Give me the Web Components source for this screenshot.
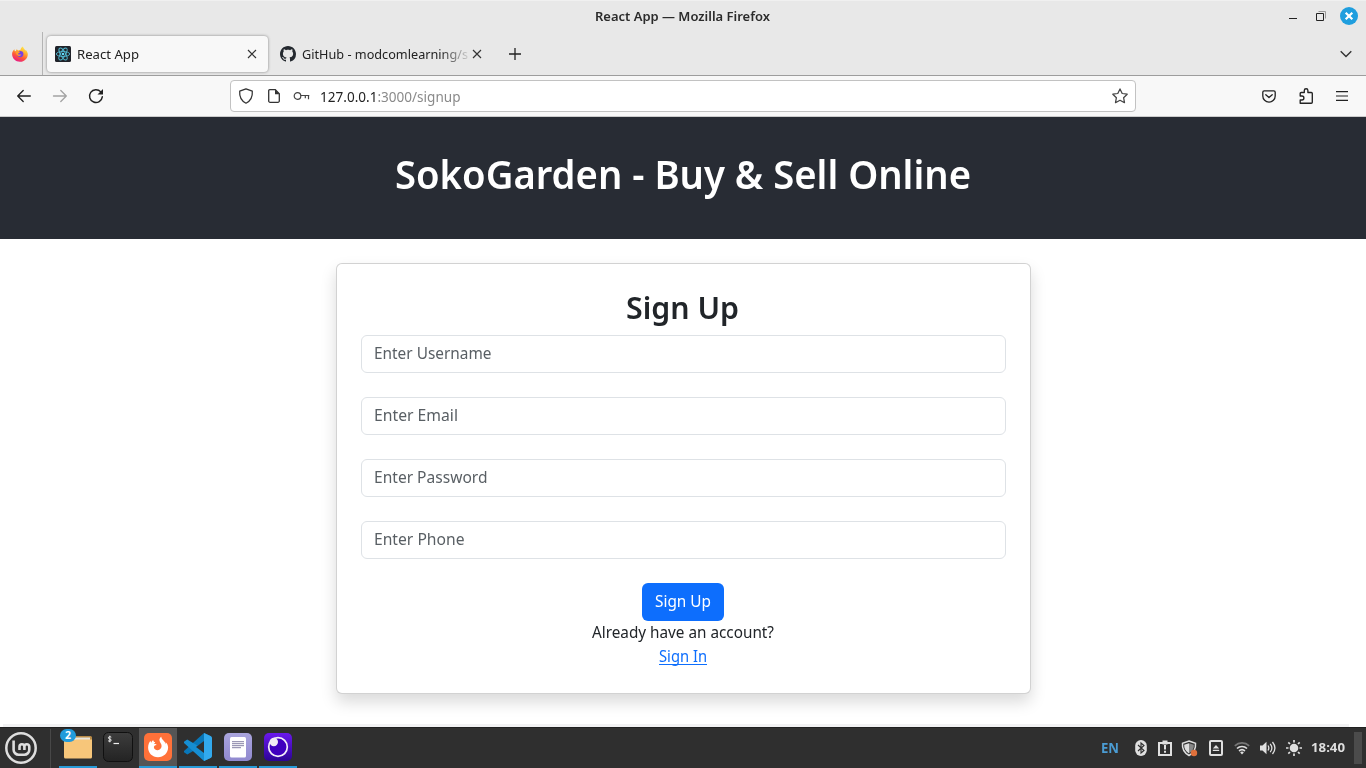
<!DOCTYPE html>
<html lang="en">
<head>
<meta charset="utf-8">
<title>React App</title>
<style>
html,body{margin:0;height:100%;overflow:hidden}
body{font-family:"Noto Sans","Open Sans",sans-serif;color:#212529;background:#fff}
</style>
</head>
<body>
<desk-screen></desk-screen>
<script>
const icons = {
firefox:['0 0 16 16','<defs><linearGradient id="a" x1=".8" y1="0" x2=".3" y2="1"><stop offset="0" stop-color="#fff14f"/><stop offset=".35" stop-color="#ffb02e"/><stop offset=".65" stop-color="#ff5a35"/><stop offset="1" stop-color="#e5158b"/></linearGradient></defs><path fill="url(#a)" d="M15.3 6.2c-.4-1-1.1-1.9-1.8-2.2.3.7.5 1.300.6 1.800-.7-2.300-2.500-3-3.300-5.300-1.500.8-2.100 2.200-2.200 3.200-.8 0-1.600.3-2.200.7-1-.3-1.400-.9-1.500-1.200-.3.200-.8.900-.8 1.700-.5.100-1 .2-1.200.3-.4-.5-.5-1.300-.4-2C1 4.200 0 6.200.1 8.300c0 4 3.500 7.500 7.900 7.500s7.800-3.500 7.800-7.600c0-.7-.2-1.400-.5-2z"/><circle cx="8.300" cy="8.100" r="3.100" fill="#7542e5"/><path fill="#ff9b2e" d="M3.500 5.300c1.500-.5 3.500-.3 4.700 1-.5.200-1.300.7-1.700 1-.8.500-.4 1.200.4 1.300 1.300.1 1.700-.4 2.500-.1-.5 1.300-2 1.800-3.300 1.200C4.700 9.100 3.500 7.500 3.500 5.300z"/>'],
react:['0 0 16 16','<rect width="16" height="16" rx="1.500" fill="#20232a"/><g fill="none" stroke="#53b9d2" stroke-width=".9"><ellipse cx="8" cy="8" rx="6.700" ry="2.500"/><ellipse cx="8" cy="8" rx="6.700" ry="2.500" transform="rotate(60 8 8)"/><ellipse cx="8" cy="8" rx="6.700" ry="2.500" transform="rotate(120 8 8)"/></g><circle cx="8" cy="8" r="1.300" fill="#61dafb"/>'],
github:['0 0 16 16','<path fill="#24292f" d="M8 0C3.580 0 0 3.580 0 8c0 3.540 2.290 6.530 5.470 7.590.4.070.55-.17.55-.38 0-.19-.01-.82-.01-1.490-2.010.37-2.530-.49-2.690-.94-.09-.23-.48-.94-.82-1.130-.28-.15-.68-.52-.01-.53.63-.01 1.080.58 1.230.82.72 1.210 1.870.87 2.330.66.070-.52.28-.87.51-1.070-1.780-.2-3.640-.89-3.640-3.950 0-.87.31-1.590.82-2.150-.08-.2-.36-1.020.08-2.120 0 0 .67-.21 2.200.82.64-.18 1.320-.27 2-.27s1.360.09 2 .27c1.530-1.040 2.200-.82 2.200-.82.44 1.100.16 1.920.08 2.120.51.56.82 1.270.82 2.150 0 3.070-1.870 3.750-3.650 3.950.29.25.54.73.54 1.480 0 1.070-.01 1.930-.01 2.200 0 .21.15.46.55.38A8.010 8.010 0 0 0 16 8c0-4.420-3.580-8-8-8z"/>'],
x:['0 0 10 10','<path d="M1 1l8 8M9 1L1 9" fill="none" stroke="#333" stroke-width="1.150"/>'],
plus:['0 0 12 12','<path d="M6 0v12M0 6h12" stroke="#222" stroke-width="1.300"/>'],
chev:['0 0 12 8','<path d="M.7 1.300L6 6.500l5.300-5.200" fill="none" stroke="#333" stroke-width="1.400"/>'],
back:['0 0 16 16','<path d="M14.300 8H1.700M7.200 2.500L1.700 8l5.500 5.500" fill="none" stroke="#222" stroke-width="1.350" stroke-linecap="round" stroke-linejoin="round"/>'],
fwd:['0 0 16 16','<path d="M1.500 8h12.800M8.800 2.500L14.300 8l-5.500 5.500" fill="none" stroke="#a3a3a3" stroke-width="1.350" stroke-linecap="round" stroke-linejoin="round"/>'],
reload:['0 0 16 16','<path d="M14.300 8.800A6.400 6.400 0 1 1 12.800 3.900" fill="none" stroke="#222" stroke-width="1.450" stroke-linecap="round"/><path d="M15 1v5.500H9.500z" fill="#222"/>'],
shield:['0 0 16 16','<path d="M8 .8L14.300 3.200c.4 5-1.400 9.500-6.300 12C3.100 12.700 1.300 8.200 1.700 3.200z" fill="none" stroke="#333" stroke-width="1.250" stroke-linejoin="round"/>'],
page:['0 0 12 14','<path d="M1.700.7h5.600l4 4v7.200a1.400 1.400 0 0 1-1.400 1.400H2.100A1.400 1.400 0 0 1 .7 11.900V1.700a1 1 0 0 1 1-1z" fill="none" stroke="#333" stroke-width="1.300"/><path d="M7 .5v4.700h4.600z" fill="#333"/>'],
key:['0 0 17 8','<circle cx="4.500" cy="4" r="3.300" fill="none" stroke="#444" stroke-width="1.200"/><path d="M7.800 3.500h8.500M12.300 3.700v2.500M15.500 3.700v3.500" fill="none" stroke="#444" stroke-width="1.200"/>'],
star:['0 0 16 16','<path d="M8 .9l2.200 4.600 5 .7-3.600 3.500.9 5L8 12.300l-4.500 2.400.9-5L.8 6.200l5-.7z" fill="none" stroke="#444" stroke-width="1.250" stroke-linejoin="round"/>'],
pocket:['0 0 14 13','<path d="M2.200.8h9.600A1.400 1.400 0 0 1 13.200 2.200v3.700a6.200 6.200 0 0 1-12.400 0V2.200A1.400 1.400 0 0 1 2.200.8z" fill="none" stroke="#222" stroke-width="1.300"/><path d="M3.800 4.700L7 7.600l3.200-2.900" fill="none" stroke="#222" stroke-width="1.300" stroke-linecap="round" stroke-linejoin="round"/>'],
puzzle:['0 0 14 16','<path d="M1.200 15.200V12h1.700a1.900 1.900 0 0 0 0-4H1.200V5.500a1 1 0 0 1 1-1h3.100V2.500a1.600 1.600 0 0 1 3.600 0v2h3.400a1 1 0 0 1 1 1v8.700a1 1 0 0 1-1 1z" fill="none" stroke="#222" stroke-width="1.350" stroke-linejoin="round"/>'],
menu:['0 0 12 10','<path d="M0 .7h12M0 5h12M0 9.300h12" stroke="#222" stroke-width="1.200"/>'],
min:['0 0 8 2','<path d="M0 1.500h8" stroke="#222"/>'],
max:['0 0 10 10','<path d="M2.500.5h7v7" fill="none" stroke="#999"/><path d="M.5 2.500h7v7h-7z" fill="none" stroke="#222"/>'],
close:['0 0 18 18','<circle cx="9" cy="9" r="9" fill="#1f9ede"/><path d="M5.700 5.700l6.600 6.600m0-6.600l-6.600 6.600" stroke="#fff" stroke-width="2.200"/>'],
mint:['0 0 32 32','<circle cx="16" cy="16" r="14.700" fill="none" stroke="#dedede" stroke-width="2.500"/><path d="M8.600 8.500v9.200a5 5 0 0 0 5 5h5.700a5 5 0 0 0 5-5v-3a2.400 2.400 0 0 0-4.900 0v3.300m0-3.300a2.400 2.400 0 0 0-4.900 0v3.300" fill="none" stroke="#dedede" stroke-width="2.600"/>'],
folder:['0 0 28 24','<path d="M0 2.500A1.500 1.500 0 0 1 1.500 1H26.500A1.500 1.500 0 0 1 28 2.500V10H0z" fill="#b98b47"/><path d="M10 2.500h16v3H10z" fill="#e9e5dc"/><path d="M0 5.500h9.500l2.500-1h16v17.500a1.500 1.500 0 0 1-1.500 1.500h-25A1.500 1.500 0 0 1 0 22z" fill="#f7c67a"/>'],
term:['0 0 30 30','<defs><linearGradient id="a" x2="0" y2="1"><stop stop-color="#3d3d3d"/><stop offset="1" stop-color="#232323"/></linearGradient></defs><rect x=".5" y=".5" width="29" height="29" rx="5" fill="url(#a)" stroke="#101010"/><path d="M8.300 5.200C7 4.300 5.200 4.800 5.300 6c.1 1.200 3 .9 3 2.100 0 1.100-1.800 1.500-3.200.7M6.800 3.700v6.600" fill="none" stroke="#eee" stroke-width=".95"/><path d="M10.500 11.500H16" stroke="#eee" stroke-width="1.200"/>'],
fox2:['0 0 28 28','<rect width="28" height="28" rx="5" fill="#ff7139"/><path fill="#fff" d="M14 24.200c-5.700 0-9.900-4.400-9.900-9.800 0-3.400 1.400-5.500 2.500-6.700 0 .7.200 1.500.6 2 .4-1.200 1-2 2-2.700 0 1.200.7 2 2 2.100-.2.800-.7 1.600-1.400 2 1.200-.5 2.600.2 3 .8-1.900-.1-3 1.100-2.900 2.400.1 1.800 1.800 3 3.800 2.900 2.300-.1 3.900-1.900 3.900-4.100 0-2.500-2.100-3.700-2.200-6 0-1.500.8-2.700 1.900-3.400.1 3.100 3.700 4 4.400 7.500.2-.8.100-1.400-.1-2 1.600 1.300 2.500 3.200 2.500 5.300 0 5.500-4.500 9.700-10.100 9.700z"/>'],
code:['0 0 28 28','<path fill="#0877b9" d="M20 0l7 3.200v4.300L3.300 21.500 0 19.300v-1.400z"/><path fill="#168ed2" d="M0 8.800L3.200 6.500 27 20.500v4.300L20 28 0 10z"/><path fill="#32a9ed" d="M20 0l7 3.300A2 2 0 0 1 28 5v18a2 2 0 0 1-1 1.700L20 28z"/><path fill="#303030" d="M20 8v12l-8-6z"/>'],
notes:['0 0 28 28','<defs><linearGradient id="a" x2="0" y2="1"><stop stop-color="#aaa5dd"/><stop offset="1" stop-color="#9089cf"/></linearGradient></defs><rect width="28" height="28" rx="5" fill="url(#a)"/><rect x="6" y="4" width="16" height="20.500" rx="1.500" fill="#fff"/><path d="M8 8.700h12M8 10.700h12M8 12.700h12M8 14.700h9" stroke="#77739a" stroke-width=".9"/>'],
moon:['0 0 28 28','<defs><linearGradient id="a" x2="0" y2="1"><stop stop-color="#6a18ed"/><stop offset="1" stop-color="#2c0496"/></linearGradient></defs><rect width="28" height="28" rx="5" fill="url(#a)"/><circle cx="14" cy="14" r="9.300" fill="#4000bf" stroke="#f4eff9" stroke-width="1.700"/><circle cx="9.800" cy="9" r="4.200" fill="#f1eaf5"/>'],
bt:['0 0 12 16','<rect x=".2" width="11.600" height="16" rx="5.700" fill="#e0e0e0"/><path d="M3 5l6 5.500L6 13V3l3 2.500L3 11" fill="none" stroke="#2f2f2f" stroke-width="1.100"/>'],
clip:['0 0 14 16','<path d="M1 3h12v12H1z" fill="none" stroke="#e0e0e0" stroke-width="2"/><path d="M4.500.5h5v4h-5z" fill="#e0e0e0"/><path d="M7 5v4.500M7 10.700v2" stroke="#e0e0e0" stroke-width="2"/>'],
safe:['0 0 17 17','<path d="M8 1l6.500 2.200c.5 5-1.300 9.300-6.500 12.300C2.800 12.500 1 8.200 1.500 3.200z" fill="#2f2f2f" stroke="#dedede" stroke-width="1.500"/><path d="M8 3.200v10.200C4.200 11 3 8 3.200 4.700z" fill="#ddd"/><path d="M8 3.200l4.800 1.500c.2 3.300-1 6.300-4.800 8.700z" fill="#888"/><circle cx="13" cy="13" r="3.200" fill="#e0713c"/>'],
eject:['0 0 14 16','<rect x="1" y="1" width="12" height="14" rx="1" fill="none" stroke="#e0e0e0" stroke-width="2"/><path d="M7 5l3.200 3.500H3.800zM3.800 9.700h6.400v1.400H3.800z" fill="#e0e0e0"/>'],
wifi:['0 0 16 14','<path d="M.8 4.800a10.500 10.500 0 0 1 14.400 0" fill="none" stroke="#777" stroke-width="1.700"/><path d="M3 7.500a7.300 7.300 0 0 1 10 0M5.100 10a4.300 4.300 0 0 1 5.800 0" fill="none" stroke="#e0e0e0" stroke-width="1.700"/><path d="M6.200 11.400a2.700 2.700 0 0 1 3.600 0L8 13.400z" fill="#e0e0e0"/>'],
vol:['0 0 16 14','<path d="M0 4.500h2.500L6.500.8v12.400l-4-3.700H0z" fill="#e0e0e0"/><path d="M8 4.500c1 1.500 1 3.500 0 5M10.200 2.800c2 2.500 2 5.900 0 8.400M12.500 1c3 3.700 3 8.300 0 12" fill="none" stroke="#e0e0e0" stroke-width="1.300"/>'],
sun:['0 0 16 16','<circle cx="8" cy="8" r="4.300" fill="#e0e0e0"/><path d="M8 0v2.500M8 13.500V16M0 8h2.500M13.500 8H16M2.300 2.300l1.700 1.700M12 12l1.700 1.700M13.700 2.300L12 4M4 12l-1.700 1.700" stroke="#e0e0e0" stroke-width="1.700"/>']
};
const define=(name,html,init)=>customElements.define(name,class extends HTMLElement{
  constructor(){super();const t=document.createElement('template');t.innerHTML=html;this.attachShadow({mode:'open'}).append(t.content.cloneNode(true));}
  connectedCallback(){if(init)init(this);}
});
define('desk-screen',`<style>:host{display:flex;flex-direction:column;width:1366px;height:768px;overflow:hidden}</style>
<window-title></window-title><tab-strip></tab-strip><nav-bar></nav-bar><site-header></site-header><site-main><signup-card></signup-card></site-main><task-bar></task-bar>`);

define('window-title',`<style>:host{display:grid;grid-template-columns:1fr auto 1fr;align-items:center;height:32px;background:#e8e8e8;border-top:1px solid #f0f0f0;box-sizing:border-box}
.b{justify-self:end;display:flex;align-items:center;gap:14px;padding:0 8px 1px 0}.b ui-icon:nth-child(1){margin:4px 5px 0 0}
fit-text{font:600 12.800px/18px "Noto Sans",sans-serif;color:#2b2b2b;grid-column:2;margin:0 1px 2px 0}</style>
<fit-text w="175">React App — Mozilla Firefox</fit-text><div class="b"><ui-icon name="min" w="8" h="2"></ui-icon><ui-icon name="max" w="10" h="10"></ui-icon><ui-icon name="close" w="18" h="18"></ui-icon></div>`);

define('tab-strip',`<style>:host{display:flex;height:44px;background:#e8e8e8;border-bottom:1px solid #9d9d9d;box-sizing:border-box;font-size:12.800px;color:#222}
.p{border-right:1px solid #b4b4b4;display:flex;align-items:center;padding-left:12px;width:30px}
.e{flex:1;display:flex;align-items:center;justify-content:space-between;padding:0 14px 0 16px}</style>
<div class="p"><ui-icon name="firefox" w="16" h="16"></ui-icon></div>
<browser-tab class="active"><ui-icon slot="icon" name="react" w="16" h="16"></ui-icon><fit-text w="62">React App</fit-text></browser-tab>
<browser-tab class="fade"><ui-icon slot="icon" name="github" w="16" h="16"></ui-icon><fit-text w="166">GitHub - modcomlearning/s</fit-text></browser-tab>
<div class="e"><ui-icon name="plus" w="12" h="12"></ui-icon><ui-icon name="chev" w="12" h="8"></ui-icon></div>`);

define('browser-tab',`<style>:host{display:flex;align-items:center;box-sizing:border-box;height:36px;margin:4px 0 0 4px;padding:0 11px 0 8px;width:221px;border-radius:4px}
:host(.active){width:221px;margin-left:4px;background:#f8f8f8;box-shadow:0 0 3px rgba(0,0,0,.45)}
.t{flex:1;margin-left:5.500px;line-height:18px;white-space:nowrap}:host(.fade) .t{-webkit-mask-image:linear-gradient(90deg,#000 138px,transparent 170px);mask-image:linear-gradient(90deg,#000 138px,transparent 170px)}</style>
<slot name="icon"></slot><div class="t"><slot></slot></div><ui-icon name="x" w="10" h="10"></ui-icon>`);

define('nav-bar',`<style>:host{display:grid;grid-template-columns:230px 906px 1fr;align-items:center;height:41px;background:#f8f8f8;border-bottom:1px solid #ccc;box-sizing:border-box}
.n{display:flex;gap:20px;padding-left:16px}.a{display:flex;align-items:center;gap:23px;justify-content:flex-end;padding-right:18px}
.u{height:32px;box-sizing:border-box;border:1px solid #c2c2c2;border-radius:4px;background:#fff;display:flex;align-items:center;padding:0 7px;font-size:13.600px;line-height:20px;color:#222}
.u fit-text{margin-top:2px}.u ui-icon:nth-child(2){margin-left:14px}.u ui-icon:nth-child(3){margin:0 10px 0 13px}.u ui-icon:last-child{margin-left:auto}i{font-style:normal;color:#8a8a8a}</style>
<div class="n"><ui-icon name="back" w="16" h="16"></ui-icon><ui-icon name="fwd" w="16" h="16"></ui-icon><ui-icon name="reload" w="16" h="16"></ui-icon></div>
<div class="u"><ui-icon name="shield" w="16" h="16"></ui-icon><ui-icon name="page" w="12" h="14"></ui-icon><ui-icon name="key" w="17" h="8"></ui-icon><fit-text w="140.500">127.0.0.1<i>:3000/signup</i></fit-text><ui-icon name="star" w="16" h="16"></ui-icon></div>
<div class="a"><ui-icon name="pocket" w="14" h="13"></ui-icon><ui-icon name="puzzle" w="14" h="16"></ui-icon><ui-icon name="menu" w="12" h="10"></ui-icon></div>`);

define('site-header',`<style>:host{display:flex;height:122px;background:#282c34;justify-content:center;align-items:flex-start;padding:33px 1px 0 0;box-sizing:border-box}
h1{margin:0;font:590 39px/48px "Noto Sans",sans-serif;color:#fff}</style><h1><fit-text w="576">SokoGarden - Buy &amp; Sell Online</fit-text></h1>`);

define('site-main',`<style>:host{display:flex;flex-direction:column;align-items:center;height:488px;box-sizing:border-box;padding-top:24px;background:#fff}
.f{width:1346px;height:3px;background:#f2f2f3;margin:auto 14px 0 0}</style><slot></slot><div class="f"></div>`);

define('signup-card',`<style>:host{display:flex;flex-direction:column;align-items:center;width:695px;height:431px;margin-left:1px;box-sizing:border-box;padding:24px;border:1px solid rgba(0,0,0,.175);border-radius:6px;background:#fff;box-shadow:0 8px 16px rgba(0,0,0,.15);font-size:15.700px;line-height:24px}
h2{margin:0 2px 8px 0;font:590 31px/39px "Noto Sans",sans-serif}
.actions{display:flex;flex-direction:column;align-items:center;margin-right:2px}
button{display:flex;align-items:center;justify-content:center;margin:0;border:0;border-radius:6px;width:82px;height:38px;padding:0 0 2px;background:#0d6efd;color:#fff;font:inherit;margin-bottom:-1px}a{color:#0d6efd;text-decoration:none}
a fit-text{background:linear-gradient(#0d6efd,#0d6efd) 0 20px/100% 1px no-repeat}</style>
<h2><fit-text w="113">Sign Up</fit-text></h2>
<form-field><fit-text w="117.500">Enter Username</fit-text></form-field><form-field><fit-text w="84">Enter Email</fit-text></form-field><form-field><fit-text w="113.500">Enter Password</fit-text></form-field><form-field><fit-text w="90.500">Enter Phone</fit-text></form-field>
<div class="actions"><button><fit-text w="56">Sign Up</fit-text></button><fit-text w="182">Already have an account?</fit-text><a href="#"><fit-text w="48">Sign In</fit-text></a></div>`);

define('form-field',`<style>:host{display:flex;align-items:center;box-sizing:border-box;width:645px;height:38px;min-height:38px;margin-bottom:24px;border:1px solid #dee2e6;border-radius:6px;padding:0 11.500px 2px;color:#595f64;background:#fff}</style><slot></slot>`);

define('task-bar',`<style>:host{display:flex;height:41px;background:#2f2f2f;border-top:1px solid #202020;box-sizing:border-box}
.m{width:51px;border-right:1px solid #484848;padding:4px 0 0 5px;box-sizing:border-box;margin:1px 8px 0 0}.m ui-icon{margin-top:-1px}
.apps{display:flex;gap:2px}.tray{margin-left:auto;display:flex;align-items:center;padding-right:4px}
.en{font:700 14px/18px "Noto Sans",sans-serif;color:#4b9cd3;margin-right:16px}.clock{font:700 12.500px/18px "Noto Sans",sans-serif;color:#dedede;margin:0 9px 0 9px}.end{width:8px;height:32px;background:#4b4b4b}</style>
<div class="m"><ui-icon name="mint" w="32" h="32"></ui-icon></div><div class="apps">
<task-button class="open" badge="2"><ui-icon name="folder" w="28" h="24"></ui-icon></task-button><task-button><ui-icon name="term" w="30" h="30"></ui-icon></task-button><task-button class="open active"><ui-icon name="fox2" w="28" h="28"></ui-icon></task-button><task-button class="open"><ui-icon name="code" w="28" h="28"></ui-icon></task-button><task-button class="open"><ui-icon name="notes" w="28" h="28"></ui-icon></task-button><task-button class="open"><ui-icon name="moon" w="28" h="28"></ui-icon></task-button></div>
<div class="tray"><fit-text class="en" w="18">EN</fit-text><ui-icon name="bt" w="12" h="16"></ui-icon><ui-icon name="clip" w="14" h="16" style="margin-left:11px"></ui-icon><ui-icon name="safe" w="17" h="17" style="margin-left:9px"></ui-icon><ui-icon name="eject" w="14" h="16" style="margin-left:11px"></ui-icon><ui-icon name="wifi" w="16" h="14" style="margin-left:11px"></ui-icon><ui-icon name="vol" w="16" h="14" style="margin-left:10px"></ui-icon><ui-icon name="sun" w="16" h="16" style="margin-left:10px"></ui-icon><fit-text class="clock" w="34">18:40</fit-text><div class="end"></div></div>`);

define('task-button',`<style>:host{position:relative;display:flex;width:38px;height:40px;box-sizing:border-box;align-items:center;justify-content:center;border-bottom:2px solid transparent}
:host(.open){border-color:#279ad7}:host(.active){background-color:#555}
b{position:absolute;left:1px;top:1px;width:16px;height:13px;border-radius:7px;background:#219bdb;color:#fff;font:700 10.500px/13px "Noto Sans",sans-serif;text-align:center}b:empty{display:none}</style><slot></slot><b></b>`,
 e=>e.shadowRoot.querySelector('b').textContent=e.getAttribute('badge')||'');

define('ui-icon','<style>:host{display:block;flex:none}svg{display:block;overflow:visible}</style>',e=>{
  const [box,body]=icons[e.getAttribute('name')],w=e.getAttribute('w'),h=e.getAttribute('h');
  e.shadowRoot.querySelector('svg')?.remove();
  e.shadowRoot.append(document.createRange().createContextualFragment(`<svg xmlns="http://www.w3.org/2000/svg" width="${w}" height="${h}" viewBox="${box}">${body}</svg>`));
});

/* Sets its text on exactly the width it is given. */
define('fit-text','<style>:host{display:block;flex:none;white-space:nowrap;text-align:left}span{display:inline-block;transform-origin:0 50%}</style><span><slot></slot></span>',e=>{
  const w=+e.getAttribute('w'),s=e.shadowRoot.querySelector('span');
  e.style.width=w+'px';
  s.style.transform=`scaleX(${w/s.getBoundingClientRect().width})`;
});
</script>
</body>
</html>
